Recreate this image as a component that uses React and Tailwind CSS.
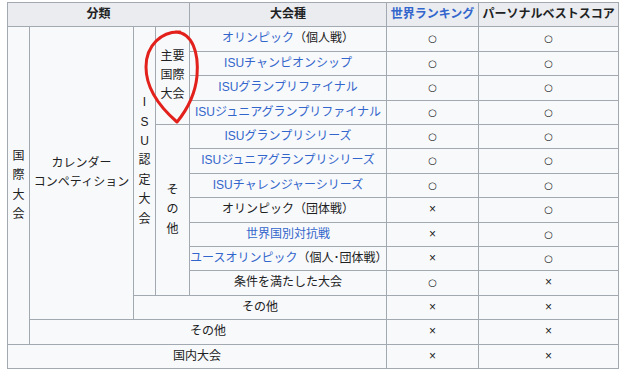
import React from 'react';

const base = 'border border-[#a2a9b1] py-[2px] text-center align-middle whitespace-nowrap';
const cell = `${base} px-[5px]`;
const tight = `${base} px-0`;
const link = 'text-[#3366cc]';

// stacked characters, one per line
const Vertical = ({ chars }) => (
  <div className="flex flex-col items-center">
    {chars.map((c, i) => (
      <span key={i}>{c}</span>
    ))}
  </div>
);

const Mark = ({ m }) =>
  m === 'o' ? (
    <span className="font-['DejaVu_Sans',sans-serif] text-[10px] font-bold">○</span>
  ) : (
    <span className="text-[12px]">×</span>
  );

const events = [
  { name: <span className={link}>オリンピック</span>, extra: '（個人戦）', rank: 'o', pb: 'o' },
  { name: <span className={link}>ISUチャンピオンシップ</span>, rank: 'o', pb: 'o' },
  { name: <span className={link}>ISUグランプリファイナル</span>, rank: 'o', pb: 'o' },
  { name: <span className={link}>ISUジュニアグランプリファイナル</span>, rank: 'o', pb: 'o' },
  { name: <span className={link}>ISUグランプリシリーズ</span>, rank: 'o', pb: 'o' },
  { name: <span className={link}>ISUジュニアグランプリシリーズ</span>, rank: 'o', pb: 'o' },
  { name: <span className={link}>ISUチャレンジャーシリーズ</span>, rank: 'o', pb: 'o' },
  { name: <span>オリンピック（団体戦）</span>, rank: 'x', pb: 'o' },
  { name: <span className={link}>世界国別対抗戦</span>, rank: 'x', pb: 'o' },
  { name: <span className={link}>ユースオリンピック</span>, extra: '（個人･団体戦）', rank: 'x', pb: 'o' },
  { name: <span>条件を満たした大会</span>, rank: 'o', pb: 'x' },
];

export default function App() {
  return (
    <div className="relative w-[635px] h-[374px] bg-white pl-[7px] pt-[2px] font-['Liberation_Sans','Noto_Sans_CJK_JP',sans-serif] text-[12px] leading-[19.4px] text-[#202122]">
      <table className="border-collapse table-fixed w-[611px] bg-[#f8f9fa]">
        <colgroup>
          <col className="w-[22px]" />
          <col className="w-[104px]" />
          <col className="w-[22px]" />
          <col className="w-[34px]" />
          <col className="w-[197px]" />
          <col className="w-[92px]" />
          <col className="w-[140px]" />
        </colgroup>
        <thead>
          <tr className="bg-[#eaecf0] font-bold">
            <th colSpan={4} className={cell}>分類</th>
            <th className={cell}>大会種</th>
            <th className={tight}><span className={link}>世界ランキング</span></th>
            <th className={tight}>パーソナルベストスコア</th>
          </tr>
        </thead>
        <tbody>
          {events.map((e, i) => (
            <tr key={i}>
              {i === 0 && (
                <>
                  <td rowSpan={13} className={tight}>
                    <Vertical chars={['国', '際', '大', '会']} />
                  </td>
                  <td rowSpan={12} className={tight}>
                    カレンダー<br />コンペティション
                  </td>
                  <td rowSpan={11} className={tight}>
                    <Vertical chars={['I', 'S', 'U', '認', '定', '大', '会']} />
                  </td>
                  <td rowSpan={4} className={tight}>
                    主要<br />国際<br />大会
                  </td>
                </>
              )}
              {i === 4 && (
                <td rowSpan={7} className={tight}>
                  <Vertical chars={['そ', 'の', '他']} />
                </td>
              )}
              <td className={tight}>
                {e.name}
                {e.extra}
              </td>
              <td className={cell}><Mark m={e.rank} /></td>
              <td className={cell}><Mark m={e.pb} /></td>
            </tr>
          ))}
          <tr>
            <td colSpan={3} className={cell}>その他</td>
            <td className={cell}><Mark m="x" /></td>
            <td className={cell}><Mark m="x" /></td>
          </tr>
          <tr>
            <td colSpan={4} className={cell}>その他</td>
            <td className={cell}><Mark m="x" /></td>
            <td className={cell}><Mark m="x" /></td>
          </tr>
          <tr>
            <td colSpan={5} className={cell}>国内大会</td>
            <td className={cell}><Mark m="x" /></td>
            <td className={cell}><Mark m="x" /></td>
          </tr>
        </tbody>
      </table>

      {/* hand-drawn red marker circle */}
      <svg className="absolute left-0 top-0 pointer-events-none" width="635" height="374" viewBox="0 0 635 374">
        <path
          d="M180 32 C162 31 146 45 146 67 C146 91 162 109 177 122 C186 111 195 97 197 76 C199 52 192 33 176 32"
          fill="none"
          stroke="#e3211c"
          strokeWidth="3"
          strokeLinecap="round"
          strokeLinejoin="round"
        />
      </svg>
    </div>
  );
}
